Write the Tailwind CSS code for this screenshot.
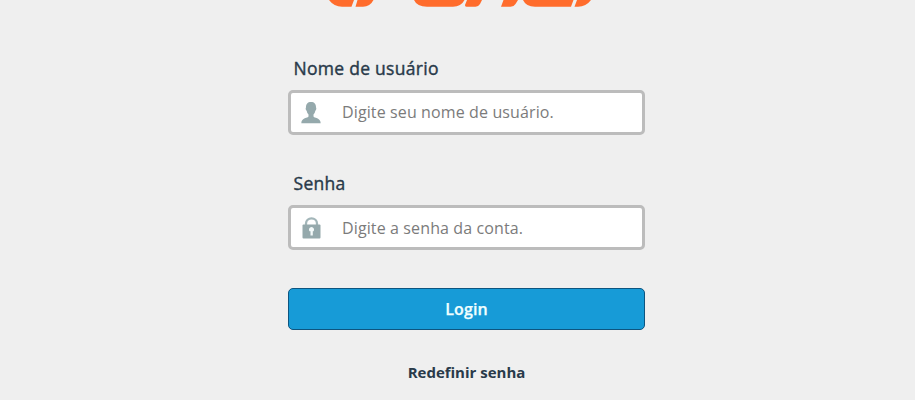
<!DOCTYPE html>
<html lang="pt-BR">
<head>
<meta charset="utf-8">
<title>Login</title>
<script src="https://cdn.jsdelivr.net/npm/@tailwindcss/browser@4"></script>
</head>
<body class="h-[400px] overflow-hidden bg-[#efefef] font-['Open_Sans',sans-serif] text-[#293a4a]">
<main class="ml-[288px] flex w-[357px] flex-col">
  <svg class="ml-[27px] h-[10px] w-[290px]" viewBox="315 0 290 10" fill="#ff6c2c" aria-label="cPanel">
    <path d="M329 0Q334 6.7 342 6.7H351.5L354 0Z"/>
    <path d="M357.5 0L355.5 6.7H363Q370 6.7 373.5 0Z"/>
    <path d="M414 0Q417 6.7 427 6.7H453Q461 6.7 464.5 0Z"/>
    <path d="M467 0L465 5Q464.7 6.7 466.5 6.7H475.5Q478.5 6.7 480 4L482 0Z"/>
    <path d="M503.5 0L501 6.7H510.5Q514 6.7 515.5 4L518 0Z"/>
    <path d="M523 0Q526 6.7 535 6.7H571L573.5 0Z"/>
    <path d="M577 0L574.5 6.7H578Q586 6.7 591 0Z"/>
  </svg>
  <label for="user" class="mt-[45px] ml-[5.5px] h-[27px] text-[17.5px] leading-[27px] tracking-[0.28px] [-webkit-text-stroke:0.4px_#293a4a]">Nome de usuário</label>
  <div class="mt-2 flex h-[45px] items-center rounded-[5px] border-[3px] border-[#bcbcbc] bg-white pl-[10px]">
    <svg class="h-[22px] w-[20px] shrink-0" viewBox="0 0 20 22" fill="#95a9ac"><path d="M10 0C6.8 0 4.8 2 5 5.5C4.3 5.7 4.8 8.6 5.7 8.7C6 10.5 6.7 11.6 7.5 12.5V14.5C7 16 0.5 15.5 0.3 21.2H19.7C19.5 15.5 13 16 12.5 14.5V12.5C13.300 11.600 14 10.500 14.300 8.700C15.200 8.600 15.700 5.700 15 5.500C15.200 2 13.200 0 10 0Z"/></svg>
    <input id="user" class="ml-[21px] w-[290px] pb-[2px] text-[16px] tracking-[0.12px] outline-none placeholder:text-[#7b7b7b]" placeholder="Digite seu nome de usuário.">
  </div>
  <label for="pass" class="mt-[35px] ml-[5.5px] h-[27px] text-[17.5px] leading-[27px] tracking-[0.28px] [-webkit-text-stroke:0.4px_#293a4a]">Senha</label>
  <div class="mt-2 flex h-[45px] items-center rounded-[5px] border-[3px] border-[#bcbcbc] bg-white pl-[11px]">
    <svg class="h-[22px] w-[19px] shrink-0" viewBox="0 0 19 22"><path d="M4 9V6.500C4 3.500 6.500 1.300 9.500 1.300S15 3.500 15 6.500V9" fill="none" stroke="#a3b6b9" stroke-width="2.300"/><rect x=".5" y="7.500" width="18" height="14" rx="1" fill="#95a9ac"/><path d="M9.500 10A2.600 2.600 0 0 0 7.500 14.200H8.500V18.500H10.800V14.200H11.500A2.600 2.600 0 0 0 9.500 10Z" fill="#f4fafa"/></svg>
    <input id="pass" type="password" class="ml-[21px] w-[290px] text-[16px] tracking-[0.12px] outline-none placeholder:text-[#7b7b7b]" placeholder="Digite a senha da conta.">
  </div>
  <button class="mt-[38px] h-[42px] rounded-[5px] border border-[#0d5580] bg-[#179bd7] text-[16px] font-semibold tracking-[0.15px] text-[#f0ffff] [-webkit-text-stroke:0.25px_#f0ffff]">Login</button>
  <a class="mt-[30px] self-center text-[15px] leading-6 font-bold">Redefinir senha</a>
</main>
</body>
</html>
